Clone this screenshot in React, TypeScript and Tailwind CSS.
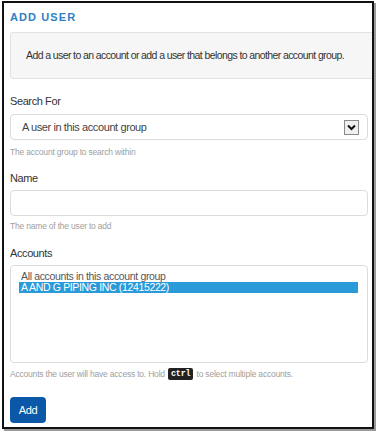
import React from 'react';

const font = { fontFamily: '"Liberation Sans", Arial, sans-serif' };

export default function App() {
  return (
    <div className="w-[376px] h-[431px] bg-white relative overflow-hidden" style={font}>
      <div className="absolute left-[2px] top-[1px] w-[372px] h-[428px] border-2 border-[#111] shadow-[2px_2px_0_#9a9a9a] overflow-hidden">
        <div className="pl-[6px] pr-[4px]">
          <h1 className="mt-[7px] h-[14px] text-[11px] leading-[14px] font-bold tracking-[0.1em] text-[#2f7fc4]">
            ADD USER
          </h1>
          <div className="mt-[8px] -mr-[10px] h-[47px] rounded-[3px] border border-[#e2e2e2] bg-[#f6f6f6] flex items-center pl-[15px]">
            <p className="text-[10.5px] tracking-[-0.6px] text-[#333] whitespace-nowrap">Add a user to an account or add a user that belongs to another account group.</p>
          </div>

          <div className="mt-[15px] text-[11px] leading-[14px] tracking-[-0.4px] text-[#333]">Search For</div>
          <div className="mt-[6px] h-[26px] rounded-[4px] border border-[#dcdcdc] bg-white flex items-center justify-between pl-[11px] pr-[8px]">
            <span className="text-[11px] tracking-[-0.4px] text-[#444]">A user in this account group</span>
            <span className="w-[15px] h-[15px] border border-[#8a8a8a] bg-[#f0f0f0] flex items-center justify-center">
              <svg width="9" height="7" viewBox="0 0 9 7">
                <path d="M1 1.5 L4.5 5 L8 1.5" fill="none" stroke="#111" strokeWidth="2" />
              </svg>
            </span>
          </div>
          <div className="mt-[6px] text-[8.5px] leading-[12px] tracking-[-0.2px] text-[#a0a0a0]">The account group to search within</div>

          <div className="mt-[13px] text-[11px] leading-[14px] tracking-[-0.4px] text-[#333]">Name</div>
          <div className="mt-[5px] h-[26px] rounded-[4px] border border-[#dcdcdc] bg-white" />
          <div className="mt-[4px] text-[8.5px] leading-[12px] tracking-[-0.2px] text-[#a0a0a0]">The name of the user to add</div>

          <div className="mt-[14px] text-[11px] leading-[14px] tracking-[-0.4px] text-[#333]">Accounts</div>
          <div className="mt-[5px] h-[98px] rounded-[4px] border border-[#dcdcdc] bg-white pt-[4px] pl-[8px] pr-[9px]">
            <div className="pl-[2px] text-[10.5px] leading-[12px] tracking-[-0.35px] text-[#555]">All accounts in this account group</div>
            <div className="h-[11px] bg-[#2a9ad8] pl-[2px] text-[10.5px] leading-[11px] tracking-[-0.35px] text-white">A AND G PIPING INC (12415222)</div>
          </div>
          <div className="mt-[5px] h-[12px] text-[8.5px] leading-[12px] tracking-[-0.2px] text-[#a0a0a0] flex items-center whitespace-nowrap">
            Accounts the user will have access to. Hold
            <span className="mx-[3px] rounded-[2px] bg-[#222] px-[3px] text-[8.5px] leading-[12px] font-bold text-white" style={{ fontFamily: '"Liberation Mono", monospace' }}>ctrl</span>
            to select multiple accounts.
          </div>

          <button className="mt-[17px] w-[36px] h-[26px] rounded-[4px] bg-[#0c58a8] text-[11px] tracking-[-0.3px] text-white">Add</button>
        </div>
      </div>
    </div>
  );
}
